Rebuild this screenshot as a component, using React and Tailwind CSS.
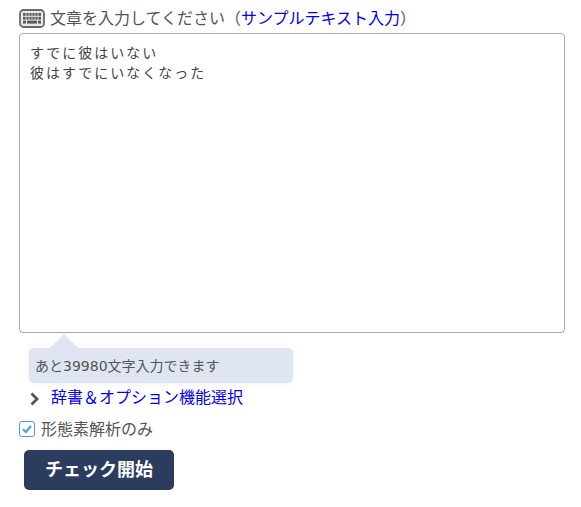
const font = { fontFamily: '"Noto Sans CJK JP", "Noto Sans", sans-serif' };

const KeyboardIcon = () => (
  <svg width="26" height="19" viewBox="0 0 26 19" className="shrink-0 mt-[2px]">
    <rect x="1" y="1" width="24" height="17" rx="3.5" fill="#e8e8e8" stroke="#6a6a6a" strokeWidth="1.8" />
    <g fill="#5a5a5a">
      <rect x="4" y="4" width="18" height="2.8" />
      <rect x="4" y="7.8" width="18" height="2.8" />
      <rect x="4" y="11.6" width="3" height="3" />
      <rect x="8" y="11.6" width="10" height="3" />
      <rect x="19" y="11.6" width="3" height="3" />
    </g>
    <g stroke="#e8e8e8" strokeWidth="0.8">
      <path d="M7 4v7M10 4v7M13 4v7M16 4v7M19 4v7" />
    </g>
  </svg>
);

const App = () => {
  return (
    <div className="w-[581px] h-[507px] bg-white pl-[19px] pr-4 pt-[6px] text-[#555]" style={font}>
      <div className="flex items-center h-[22px] text-base leading-[22px]">
        <KeyboardIcon />
        <span className="ml-[5px]">文章を入力してください（</span>
        <a className="text-[#0000ee]">サンプルテキスト入力</a>
        <span>）</span>
      </div>

      <textarea
        readOnly
        className="block mt-[5px] w-[546px] h-[300px] border border-[#aaa] rounded-[4px] pl-[10px] pr-2 py-2 text-sm leading-[20px] tracking-[2px] text-[#444] resize-none outline-none"
        defaultValue={"すでに彼はいない\n彼はすでにいなくなった"}
      />

      <div className="relative ml-[10px] mt-[15px] w-[264px] h-[35px] bg-[#dfe5f1] rounded-[5px] pl-[6px] text-sm leading-[34px] shadow-[0_0_6px_rgba(0,0,0,0.06)]">
        <span className="absolute left-[21px] -top-[14px] w-0 h-0 border-x-[14px] border-x-transparent border-b-[14px] border-b-[#dfe5f1]" />
        あと<span className="font-['DejaVu_Sans']">39980</span>文字入力できます
      </div>

      <div className="flex items-center h-6 mt-[1px] ml-[11px]">
        <svg width="10" height="14" viewBox="0 0 10 14" className="shrink-0 mt-[6px]">
          <path d="M1.5 1.5l5.5 5.5-5.5 5.5" fill="none" stroke="#555" strokeWidth="2.8" />
        </svg>
        <a className="ml-[11px] text-base text-[#0000ee]">辞書＆オプション機能選択</a>
      </div>

      <label className="flex items-center h-6 mt-[8px]">
        <span className="flex items-center justify-center w-4 h-4 mt-[2px] border-[1.5px] border-[#4a9fd8] rounded-[3px] bg-white">
          <svg width="12" height="12" viewBox="0 0 12 12">
            <path d="M2 6.2l2.8 2.8L10 3" fill="none" stroke="#4a9fd8" strokeWidth="2.2" />
          </svg>
        </span>
        <span className="ml-[6px] text-base">形態素解析のみ</span>
      </label>

      <button className="block ml-[5px] mt-[10px] w-[150px] h-10 pb-1 rounded-[5px] bg-[#2b3c5e] text-white text-lg font-bold">
        チェック開始
      </button>
    </div>
  );
};

export default App;
